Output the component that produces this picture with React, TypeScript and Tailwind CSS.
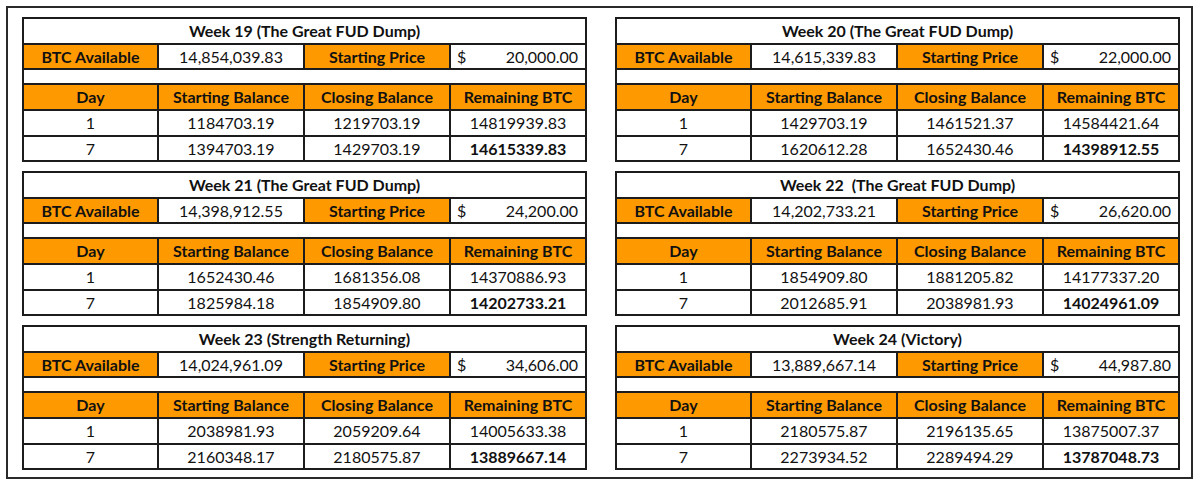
import React from "react";

type Week = {
  title: string;
  available: string;
  price: string;
  rows: [string, string, string, string][];
};

const weeks: Week[] = [
  {
    title: "Week 19 (The Great FUD Dump)",
    available: "14,854,039.83",
    price: "20,000.00",
    rows: [
      ["1", "1184703.19", "1219703.19", "14819939.83"],
      ["7", "1394703.19", "1429703.19", "14615339.83"],
    ],
  },
  {
    title: "Week 20 (The Great FUD Dump)",
    available: "14,615,339.83",
    price: "22,000.00",
    rows: [
      ["1", "1429703.19", "1461521.37", "14584421.64"],
      ["7", "1620612.28", "1652430.46", "14398912.55"],
    ],
  },
  {
    title: "Week 21 (The Great FUD Dump)",
    available: "14,398,912.55",
    price: "24,200.00",
    rows: [
      ["1", "1652430.46", "1681356.08", "14370886.93"],
      ["7", "1825984.18", "1854909.80", "14202733.21"],
    ],
  },
  {
    title: "Week 22  (The Great FUD Dump)",
    available: "14,202,733.21",
    price: "26,620.00",
    rows: [
      ["1", "1854909.80", "1881205.82", "14177337.20"],
      ["7", "2012685.91", "2038981.93", "14024961.09"],
    ],
  },
  {
    title: "Week 23 (Strength Returning)",
    available: "14,024,961.09",
    price: "34,606.00",
    rows: [
      ["1", "2038981.93", "2059209.64", "14005633.38"],
      ["7", "2160348.17", "2180575.87", "13889667.14"],
    ],
  },
  {
    title: "Week 24 (Victory)",
    available: "13,889,667.14",
    price: "44,987.80",
    rows: [
      ["1", "2180575.87", "2196135.65", "13875007.37"],
      ["7", "2273934.52", "2289494.29", "13787048.73"],
    ],
  },
];

const cell = "border-2 border-[#1c1c1c] p-0 text-center leading-none";
const orange = "bg-[#ff9900] font-bold";

function WeekTable({ w }: { w: Week }) {
  return (
    <table className="w-[563px] table-fixed border-collapse bg-white text-[16px] text-[#111]">
      <colgroup>
        <col className="w-[135px]" />
        <col className="w-[146px]" />
        <col className="w-[146px]" />
        <col className="w-[136px]" />
      </colgroup>
      <tbody>
        <tr className="h-[26px]">
          <td colSpan={4} className={`${cell} font-bold`}>
            <span className="whitespace-pre">{w.title}</span>
          </td>
        </tr>
        <tr className="h-[25px]">
          <td className={`${cell} ${orange}`}>BTC Available</td>
          <td className={cell}>{w.available}</td>
          <td className={`${cell} ${orange}`}>Starting Price</td>
          <td className={cell}>
            <div className="flex justify-between pl-[6px] pr-[7px]">
              <span>$</span>
              <span>{w.price}</span>
            </div>
          </td>
        </tr>
        <tr className="h-[15px]">
          <td colSpan={4} className={cell}></td>
        </tr>
        <tr className="h-[26px]">
          <td className={`${cell} ${orange}`}>Day</td>
          <td className={`${cell} ${orange}`}>Starting Balance</td>
          <td className={`${cell} ${orange}`}>Closing Balance</td>
          <td className={`${cell} ${orange}`}>Remaining BTC</td>
        </tr>
        {w.rows.map((r, i) => (
          <tr key={i} className={i === 0 ? "h-[26px]" : "h-[25px]"}>
            <td className={cell}>{r[0]}</td>
            <td className={cell}>{r[1]}</td>
            <td className={cell}>{r[2]}</td>
            <td className={`${cell} ${i === w.rows.length - 1 ? "font-bold" : ""}`}>{r[3]}</td>
          </tr>
        ))}
      </tbody>
    </table>
  );
}

export default function App() {
  return (
    <div className="h-[487px] w-[1200px] bg-white pt-[6px] pl-[6px]" style={{ fontFamily: "Lato, 'Open Sans', sans-serif" }}>
      <div className="grid h-[473px] w-[1187px] grid-cols-[563px_563px] content-start gap-x-[30px] gap-y-[9px] border-2 border-[#2a2a2a] pt-[9px] pl-[14px]">
        {weeks.map((w) => (
          <WeekTable key={w.title} w={w} />
        ))}
      </div>
    </div>
  );
}
